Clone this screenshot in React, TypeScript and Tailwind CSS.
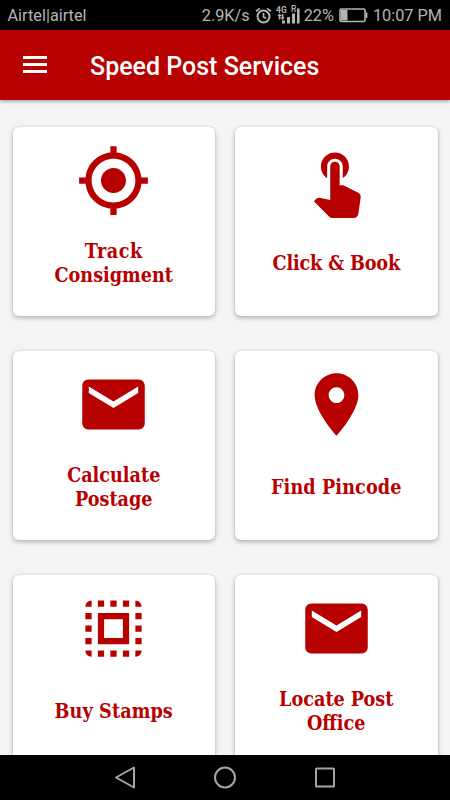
import React from "react";

const RED = "#b70000";

const paths = {
  target:
    "M12 8c-2.21 0-4 1.79-4 4s1.79 4 4 4 4-1.79 4-4-1.79-4-4-4zm8.94 3c-.46-4.17-3.77-7.48-7.94-7.94V1h-2v2.06C6.83 3.52 3.52 6.83 3.06 11H1v2h2.06c.46 4.17 3.77 7.48 7.94 7.94V23h2v-2.06c4.17-.46 7.48-3.77 7.94-7.94H23v-2h-2.06zM12 19c-3.87 0-7-3.13-7-7s3.13-7 7-7 7 3.13 7 7-3.13 7-7 7z",
  touch:
    "M9 11.24V7.5C9 6.12 10.12 5 11.5 5S14 6.12 14 7.5v3.74c1.21-.81 2-2.18 2-3.74C16 5.01 13.99 3 11.5 3S7 5.01 7 7.5c0 1.56.79 2.93 2 3.74zm9.84 4.63l-4.54-2.26c-.17-.07-.35-.11-.54-.11H13v-6c0-.83-.67-1.5-1.5-1.5S10 6.67 10 7.5v10.74l-3.43-.72c-.08-.01-.15-.03-.24-.03-.31 0-.59.13-.79.33l-.79.8 4.94 4.94c.27.27.65.44 1.06.44h6.79c.75 0 1.33-.55 1.44-1.28l.75-5.27c.01-.07.02-.14.02-.2 0-.62-.38-1.16-.91-1.38z",
  mail:
    "M20 4H4c-1.1 0-1.99.9-1.99 2L2 18c0 1.1.9 2 2 2h16c1.1 0 2-.9 2-2V6c0-1.1-.9-2-2-2zm-.1 4.3L12 13.1 4.1 8.3V6.2L12 11l7.9-4.8v2.1z",
  pin:
    "M12 2C8.13 2 5 5.13 5 9c0 5.25 7 13 7 13s7-7.75 7-13c0-3.87-3.13-7-7-7zm0 9.5c-1.38 0-2.5-1.12-2.5-2.5s1.12-2.5 2.5-2.5 2.5 1.12 2.5 2.5-1.12 2.5-2.5 2.5z",
  stamps:
    "M3 5h2V3c-1.1 0-2 .9-2 2zm0 8h2v-2H3v2zm4 8h2v-2H7v2zM3 9h2V7H3v2zm10-6h-2v2h2V3zm6 0v2h2c0-1.1-.9-2-2-2zM5 21v-2H3c0 1.1.9 2 2 2zm-2-4h2v-2H3v2zM9 3H7v2h2V3zm2 18h2v-2h-2v2zm8-8h2v-2h-2v2zm0 8c1.1 0 2-.9 2-2h-2v2zm0-12h2V7h-2v2zm0 8h2v-2h-2v2zm-4 4h2v-2h-2v2zm0-16h2V3h-2v2zM7 17h10V7H7v10zm2-8h6v6H9V9z",
};

type Line = { text: string; tracking: string };
type Tile = { icon: keyof typeof paths; lines: Line[] };

const tiles: Tile[] = [
  {
    icon: "target",
    lines: [
      { text: "Track", tracking: "tracking-[0.5px]" },
      { text: "Consigment", tracking: "tracking-normal" },
    ],
  },
  { icon: "touch", lines: [{ text: "Click & Book", tracking: "tracking-[-0.15px]" }] },
  {
    icon: "mail",
    lines: [
      { text: "Calculate", tracking: "tracking-normal" },
      { text: "Postage", tracking: "tracking-normal" },
    ],
  },
  { icon: "pin", lines: [{ text: "Find Pincode", tracking: "tracking-[0.1px]" }] },
  { icon: "stamps", lines: [{ text: "Buy Stamps", tracking: "tracking-[0.1px]" }] },
  {
    icon: "mail",
    lines: [
      { text: "Locate Post", tracking: "tracking-normal" },
      { text: "Office", tracking: "tracking-normal" },
    ],
  },
];

function StatusBar() {
  return (
    <div className="flex h-[30px] shrink-0 items-center bg-black pl-[7.5px] pr-2 pt-px text-[16.3px] leading-[30px] text-[#b4b4b4]">
      <span className="mr-auto">Airtel|airtel</span>
      <span>2.9K/s</span>
      <svg className="ml-[5px]" width="17" height="18" viewBox="0 0 17 18" fill="none" stroke="#b4b4b4" strokeWidth="2">
        <circle cx="8.5" cy="9.5" r="6" />
        <path d="M8.5 6V10L11.3 11.3M1 4.4L4.8 1.3M16 4.4L12.2 1.3" strokeWidth="1.7" />
      </svg>
      <svg className="ml-1" width="25" height="22" viewBox="0 0 25 22" fill="#b4b4b4">
        <text x="0" y="7.5" fontSize="8.5" fontWeight="700" fontFamily="Roboto, sans-serif">4G</text>
        <text x="15" y="6.5" fontSize="8.5" fontWeight="500" fontFamily="Roboto, sans-serif">R</text>
        <path d="M3.5 8.5L5.8 11H4.3V14.5H2.7V11H1.2zM6.6 15L4.3 12.5H5.8V9H7.4V12.5H8.9z" />
        <path d="M6 15.5h3v3H6zM11 12h3v6.5h-3zM16 8.5h3v10h-3zM21 3.5h2.6v15H21z" />
      </svg>
      <span className="ml-[3px]">22%</span>
      <svg className="ml-[5px]" width="29" height="15" viewBox="0 0 29 15" fill="none" stroke="#b4b4b4" strokeWidth="1.6">
        <rect x="1" y="1" width="25" height="12.5" rx="1.2" />
        <path d="M27.6 4.5V10" />
        <path d="M2 2h6.5v10.5H2z" fill="#b4b4b4" stroke="none" />
      </svg>
      <span className="ml-[5px]">10:07 PM</span>
    </div>
  );
}

function Card({ tile }: { tile: Tile }) {
  return (
    <div className="flex h-[189px] flex-col items-center rounded-[6px] bg-white pt-4 shadow-[0_2px_5px_rgba(0,0,0,0.25),0_0_2px_rgba(0,0,0,0.16)]">
      <svg className="h-[75px] w-[75px] shrink-0" viewBox="0 0 24 24" fill={RED}>
        <path d={paths[tile.icon]} />
      </svg>
      <div className="mt-[22px] flex h-12 flex-col items-center justify-center font-['DejaVu_Serif_Condensed','DejaVu_Serif',serif] text-[19.6px] font-bold leading-6 text-[#b70000]">
        {tile.lines.map((l) => (
          <span key={l.text} className={`whitespace-nowrap ${l.tracking}`}>
            {l.text}
          </span>
        ))}
      </div>
    </div>
  );
}

export default function App() {
  return (
    <div className="flex h-[800px] w-[450px] flex-col overflow-hidden bg-[#f4f4f4] font-[Roboto,sans-serif]">
      <StatusBar />
      <header className="z-10 flex h-[70px] shrink-0 items-center bg-[#b70000] pl-[23px] pt-1 shadow-[0_1px_4px_rgba(0,0,0,0.4)]">
        <div className="flex w-6 flex-col gap-[4px] pb-[5px]">
          <div className="h-[3px] bg-white" />
          <div className="h-[3px] bg-white" />
          <div className="h-[3px] bg-white" />
        </div>
        <h1 className="ml-[43px] text-[25px] font-medium text-white">Speed Post Services</h1>
      </header>
      <main className="grid min-h-0 flex-1 grid-cols-2 content-start gap-x-5 gap-y-[35px] overflow-hidden px-[12.5px] pt-[27px]">
        {tiles.map((t, i) => (
          <Card key={i} tile={t} />
        ))}
      </main>
      <nav className="flex h-[45px] shrink-0 items-center justify-center gap-[76px] bg-black">
        <svg width="24" height="26" viewBox="0 0 24 26" fill="none" stroke="#a5a5a5" strokeWidth="2" strokeLinejoin="round">
          <path d="M21 2.5V22.5L3 12.5z" />
        </svg>
        <svg width="24" height="24" viewBox="0 0 24 24" fill="none" stroke="#a5a5a5" strokeWidth="2">
          <circle cx="12" cy="11.5" r="10" />
        </svg>
        <svg width="24" height="24" viewBox="0 0 24 24" fill="none" stroke="#a5a5a5" strokeWidth="2">
          <rect x="3" y="2.5" width="18" height="18" rx="0.5" />
        </svg>
      </nav>
    </div>
  );
}
